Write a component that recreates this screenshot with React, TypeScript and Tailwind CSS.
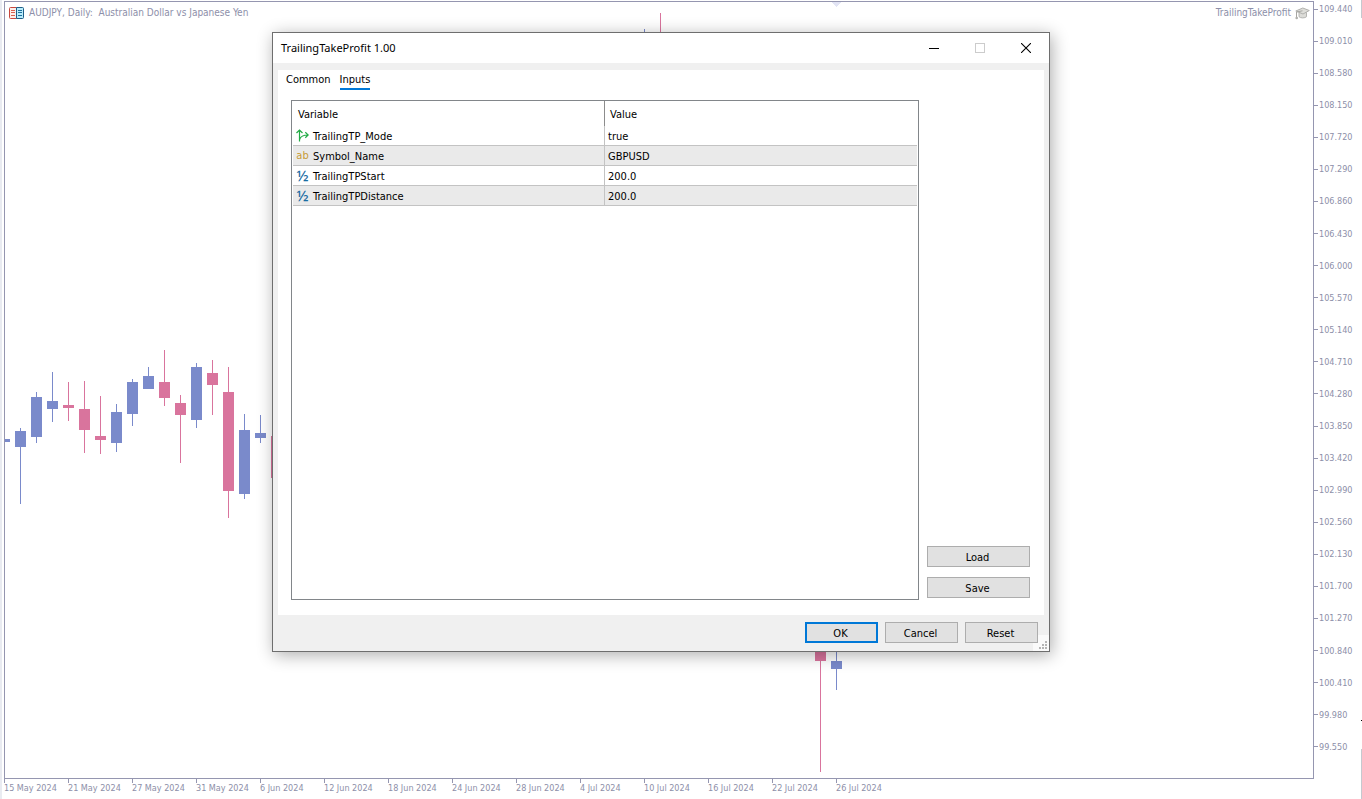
import React, { useState } from 'react'

type Candle = {
  slot: number
  up: boolean
  high: number
  low: number
  top: number
  bottom: number
}

type InputType = 'bool' | 'string' | 'double'

type InputRow = {
  name: string
  value: string
  type: InputType
}

// y values are measured from the top of the plot
const CANDLES: Candle[] = [
  { slot: -1, up: true, high: 437, low: 440, top: 437, bottom: 440 },
  { slot: 0, up: true, high: 426, low: 502, top: 429, bottom: 445 },
  { slot: 1, up: true, high: 390, low: 441, top: 395, bottom: 435 },
  { slot: 2, up: true, high: 370, low: 420, top: 399, bottom: 407 },
  { slot: 3, up: false, high: 380, low: 419, top: 403, bottom: 406 },
  { slot: 4, up: false, high: 379, low: 451, top: 407, bottom: 428 },
  { slot: 5, up: false, high: 394, low: 452, top: 434, bottom: 438 },
  { slot: 6, up: true, high: 402, low: 450, top: 410, bottom: 441 },
  { slot: 7, up: true, high: 377, low: 424, top: 380, bottom: 412 },
  { slot: 8, up: true, high: 365, low: 387, top: 374, bottom: 387 },
  { slot: 9, up: false, high: 348, low: 404, top: 380, bottom: 396 },
  { slot: 10, up: false, high: 393, low: 461, top: 401, bottom: 413 },
  { slot: 11, up: true, high: 361, low: 426, top: 365, bottom: 418 },
  { slot: 12, up: false, high: 358, low: 413, top: 371, bottom: 383 },
  { slot: 13, up: false, high: 365, low: 516, top: 390, bottom: 489 },
  { slot: 14, up: true, high: 412, low: 497, top: 428, bottom: 492 },
  { slot: 15, up: true, high: 413, low: 441, top: 431, bottom: 436 },
  { slot: 16, up: false, high: 434, low: 476, top: 434, bottom: 476 },
  { slot: 39, up: true, high: 27, low: 140, top: 60, bottom: 120 },
  { slot: 40, up: false, high: 11, low: 140, top: 50, bottom: 110 },
  { slot: 50, up: false, high: 600, low: 770, top: 610, bottom: 659 },
  { slot: 51, up: true, high: 640, low: 688, top: 659, bottom: 667 },
]

const PRICES = [
  '109.440', '109.010', '108.580', '108.150', '107.720', '107.290',
  '106.860', '106.430', '106.000', '105.570', '105.140', '104.710',
  '104.280', '103.850', '103.420', '102.990', '102.560', '102.130',
  '101.700', '101.270', '100.840', '100.410', '99.980', '99.550',
]

const DATES = [
  '15 May 2024', '21 May 2024', '27 May 2024', '31 May 2024',
  '6 Jun 2024', '12 Jun 2024', '18 Jun 2024', '24 Jun 2024',
  '28 Jun 2024', '4 Jul 2024', '10 Jul 2024', '16 Jul 2024',
  '22 Jul 2024', '26 Jul 2024',
]

const INPUTS: InputRow[] = [
  { name: 'TrailingTP_Mode', value: 'true', type: 'bool' },
  { name: 'Symbol_Name', value: 'GBPUSD', type: 'string' },
  { name: 'TrailingTPStart', value: '200.0', type: 'double' },
  { name: 'TrailingTPDistance', value: '200.0', type: 'double' },
]

const Candles: React.FC = () => (
  <svg className="absolute inset-0 h-full w-full" shapeRendering="crispEdges">
    {CANDLES.map(({ slot, up, high, low, top, bottom }) => {
      const x = 15 + slot * 16
      return (
        <g key={slot} fill={up ? '#7a8acb' : '#d9749d'}>
          <rect x={x} y={high} width={1} height={low - high} />
          <rect x={x - 5} y={top} width={11} height={bottom - top} />
        </g>
      )
    })}
    <path d="M826 0h10l-5 5z" fill="#e2e4f4" />
  </svg>
)

const MarketIcon: React.FC = () => (
  <svg width="15" height="12" viewBox="0 0 15 12" fill="none">
    <path d="M7.5 .5H1.5a1 1 0 0 0-1 1v9a1 1 0 0 0 1 1h6" fill="#fdeeea" stroke="#c8473d" />
    <path d="M7.5 .5h6a1 1 0 0 1 1 1v9a1 1 0 0 1-1 1h-6z" fill="#b9ecfb" stroke="#1f5f86" />
    <path d="M2 3.5h4M2 5.5h4M2 8.5h4" stroke="#d9604f" />
    <path d="M9 3.5h4M9 5.5h4M9 8.5h4" stroke="#1f6f9c" />
  </svg>
)

const ExpertIcon: React.FC = () => (
  <svg width="15" height="13" viewBox="0 0 15 13" fill="none">
    <path d="M4 5.5v4.2c1.6 1.6 5.8 1.6 7.5 0V5.5z" fill="#dcdcd8" stroke="#b4b4b1" />
    <path d="M.8 4 7.8 1l6.5 2.5L8 7z" fill="#dededa" stroke="#b0b0ad" strokeLinejoin="round" />
    <path d="M7.5 3.8 1.5 5v5.500" stroke="#a6a6a2" />
    <circle cx="1.7" cy="11" r="1.3" fill="#b0b0ad" />
  </svg>
)

const TypeIcon: React.FC<{ type: InputType }> = ({ type }) => {
  switch (type) {
    case 'bool':
      return (
        <svg width="13" height="13" viewBox="0 0 13 13" fill="none" stroke="#22ab45" strokeWidth="1.2">
          <path d="M3.5 12.5V1M.5 4l3-3 3 3" />
          <path d="M3.5 10.5C4.5 7.5 6.5 6 12 6M9.3 3.2 12.2 6 9.3 8.8" />
        </svg>
      )
    case 'string':
      return <span className="text-[11px] leading-4 text-[#c79a35]">ab</span>
    default:
      return (
        <span className="pb-0.5 font-['Noto_Sans',sans-serif] text-[15px] font-medium leading-4 text-[#1a6da3]">
          ½
        </span>
      )
  }
}

const DialogButton: React.FC<{
  label: string
  primary?: boolean
  wide?: boolean
}> = ({ label, primary, wide }) => (
  <button
    type="button"
    className={`flex h-[21px] items-center justify-center bg-[#e1e1e1] pr-0.5 pt-0.5 ${
      wide ? 'w-[103px]' : 'w-[73px]'
    } ${primary ? 'border-2 border-[#0078d7]' : 'border border-[#adadad]'}`}
  >
    {label}
  </button>
)

const TitleBar: React.FC = () => (
  <div className="flex h-[30px] items-center bg-white pl-2 font-['Noto_Sans',sans-serif]">
    <h1 className="flex-1">TrailingTakeProfit 1.00</h1>
    <button type="button" aria-label="Minimize" className="flex h-full w-[46px] items-center justify-center">
      <svg width="10" height="11" shapeRendering="crispEdges">
        <path d="M0 5.5h10" stroke="#000" />
      </svg>
    </button>
    <button type="button" aria-label="Maximize" disabled className="flex h-full w-[46px] items-center justify-center">
      <svg width="10" height="10" shapeRendering="crispEdges">
        <rect x=".5" y=".5" width="9" height="9" fill="none" stroke="#ccc" />
      </svg>
    </button>
    <button type="button" aria-label="Close" className="flex h-full w-[46px] items-center justify-center">
      <svg width="10" height="10">
        <path d="M0 0l10 10M10 0L0 10" stroke="#000" strokeWidth="1.1" />
      </svg>
    </button>
  </div>
)

const InputsTable: React.FC = () => (
  <div className="h-[500px] flex-1 border border-[#82868a] px-px">
    <table className="w-full table-fixed border-separate border-spacing-0 text-left">
      <colgroup>
        <col className="w-[311px]" />
        <col />
      </colgroup>
      <thead>
        <tr>
          <th className="h-[25px] pb-0 pl-[5px] pt-0.5 font-normal">Variable</th>
          <th className="border-l border-[#8c8c8c] pb-0 pl-[5px] pt-0.5 font-normal">Value</th>
        </tr>
      </thead>
      <tbody>
        {INPUTS.map(({ name, value, type }) => (
          <tr key={name} className="even:bg-[#eaeaea]">
            <td className="h-5 border-b border-[#c3c3c3] py-0 pl-[3px]">
              <div className="flex h-[19px] items-center gap-1">
                <span className="flex w-[13px] justify-center">
                  <TypeIcon type={type} />
                </span>
                <span className="pt-0.5">{name}</span>
              </div>
            </td>
            <td className="border-b border-l border-[#c3c3c3] pb-0 pl-[3px] pt-0.5">{value}</td>
          </tr>
        ))}
      </tbody>
    </table>
  </div>
)

const TABS = ['Common', 'Inputs']

const InputsDialog: React.FC = () => {
  const [tab, setTab] = useState<string>('Inputs')

  return (
    <section
      role="dialog"
      aria-label="TrailingTakeProfit 1.00"
      className="absolute left-[270px] top-8 w-[778px] border border-[#6e6e6e] bg-[#f0f0f0] font-['DejaVu_Sans_Condensed','DejaVu_Sans',sans-serif] text-[11px] leading-4 text-black shadow-[2px_3px_16px_rgba(0,0,0,0.32)]"
    >
      <TitleBar />
      <div className="mx-[5px] mt-[7px] h-[545px] bg-white pl-[13px]">
        <div role="tablist" className="-ml-[5px] flex gap-[9px] pt-0.5">
          {TABS.map((item) => (
            <button
              key={item}
              type="button"
              role="tab"
              aria-selected={item === tab}
              onClick={() => setTab(item)}
              className={`h-[18px] border-b-2 leading-[14px] ${
                item === tab ? 'border-[#0078d7]' : 'border-transparent'
              }`}
            >
              {item}
            </button>
          ))}
        </div>
        <div className="mt-[10px] flex gap-2 pr-[14px]">
          <InputsTable />
          <div className="flex flex-col justify-end gap-[10px] pb-0.5">
            <DialogButton label="Load" wide />
            <DialogButton label="Save" wide />
          </div>
        </div>
      </div>
      <svg className="absolute bottom-0 right-0" width="16" height="16" shapeRendering="crispEdges">
        <path d="M0 0h16v16H0z" fill="#fafafa" />
        <path d="M12 6h2v2h-2zM9 9h2v2H9zM12 9h2v2h-2zM6 12h2v2H6zM9 12h2v2H9zM12 12h2v2h-2z" fill="#b4b4b4" />
      </svg>
      <div className="relative flex justify-end gap-[7px] pb-2 pr-[11px] pt-[7px]">
        <DialogButton label="OK" primary />
        <DialogButton label="Cancel" />
        <DialogButton label="Reset" />
      </div>
    </section>
  )
}

export default function App() {
  return (
    <main className="relative flex min-h-screen flex-col overflow-hidden border-l-2 border-[#e9ebf1] bg-white pl-0.5 pt-px font-['DejaVu_Sans_Condensed','DejaVu_Sans',sans-serif] text-[9px] text-[#8d8fa9]">
      <div className="flex flex-1">
        <div className="relative flex-1 overflow-hidden border border-[#9596b0]">
          <Candles />
          <header className="relative flex items-center pl-1 pr-[3px] pt-1 text-[10px]">
            <MarketIcon />
            <p className="flex-1 whitespace-pre pl-[5px] leading-[14px]">
              {'AUDJPY, Daily:  Australian Dollar vs Japanese Yen'}
            </p>
            <span className="pr-1 leading-[14px]">TrailingTakeProfit</span>
            <ExpertIcon />
          </header>
        </div>
        <ul className="flex w-12 flex-col justify-between pb-[26px] pt-0.5 leading-3">
          {PRICES.map((price) => (
            <li key={price} className="flex items-center gap-px">
              <span className="h-px w-1 bg-[#9596b0]" />
              {price}
            </li>
          ))}
        </ul>
      </div>
      <ul className="flex h-5">
        {DATES.map((date) => (
          <li key={date} className="w-16 whitespace-nowrap leading-[10px]">
            <span className="block h-1 w-px bg-[#9596b0]" />
            {date}
          </li>
        ))}
      </ul>
      <div className="absolute inset-y-0 right-0 flex w-px flex-col">
        <span className="h-[18px] bg-[#c5c9cf]" />
        <span className="mt-auto h-px bg-black" />
        <span className="mt-7 h-[50px] bg-[#c5c9cf]" />
      </div>
      <InputsDialog />
    </main>
  )
}
